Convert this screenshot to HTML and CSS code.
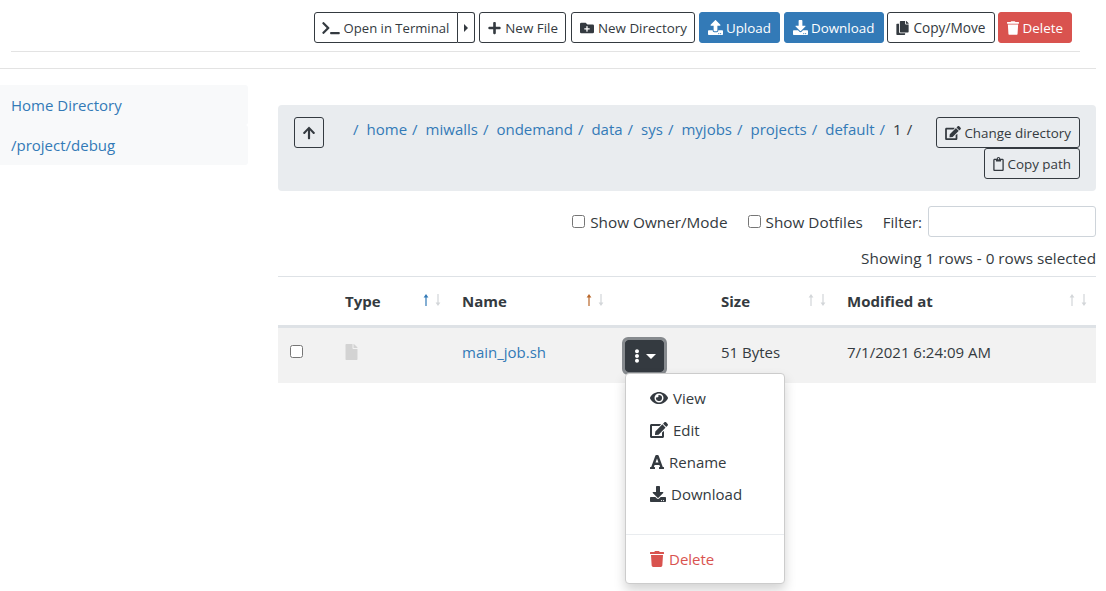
FILE: index.html
```html
<!DOCTYPE html>
<html lang="en">
<head>
<meta charset="utf-8">
<title>Files</title>
<link rel="stylesheet" href="styles.css">
</head>
<body>
<svg class="defs" aria-hidden="true">
<symbol id="i-upload" viewBox="0 0 512 512"><path d="M296 384h-80c-13.3 0-24-10.7-24-24V192h-87.7c-17.8 0-26.7-21.5-14.1-34.1L242.3 5.7c7.5-7.5 19.8-7.5 27.3 0l152.2 152.2c12.6 12.6 3.7 34.1-14.1 34.1H320v168c0 13.3-10.7 24-24 24zm216-8v112c0 13.3-10.7 24-24 24H24c-13.3 0-24-10.7-24-24V376c0-13.3 10.7-24 24-24h136v8c0 30.9 25.1 56 56 56h80c30.9 0 56-25.1 56-56v-8h136c13.3 0 24 10.7 24 24zm-124 88c0-11-9-20-20-20s-20 9-20 20 9 20 20 20 20-9 20-20zm64 0c0-11-9-20-20-20s-20 9-20 20 9 20 20 20 20-9 20-20z"/></symbol>
<symbol id="i-download" viewBox="0 0 512 512"><path d="M216 0h80c13.3 0 24 10.7 24 24v168h87.7c17.8 0 26.7 21.5 14.1 34.1L269.7 378.3c-7.5 7.5-19.8 7.5-27.3 0L90.1 226.1c-12.6-12.6-3.7-34.1 14.1-34.1H192V24c0-13.3 10.7-24 24-24zm296 376v112c0 13.3-10.7 24-24 24H24c-13.3 0-24-10.7-24-24V376c0-13.3 10.7-24 24-24h146.7l49 49c20.1 20.1 52.5 20.1 72.6 0l49-49H488c13.3 0 24 10.7 24 24zm-124 88c0-11-9-20-20-20s-20 9-20 20 9 20 20 20 20-9 20-20zm64 0c0-11-9-20-20-20s-20 9-20 20 9 20 20 20 20-9 20-20z"/></symbol>
<symbol id="i-trash" viewBox="0 0 448 512"><path d="M432 32H312l-9.4-18.7A24 24 0 0 0 281.1 0H166.8a23.72 23.72 0 0 0-21.4 13.3L136 32H16A16 16 0 0 0 0 48v32a16 16 0 0 0 16 16h416a16 16 0 0 0 16-16V48a16 16 0 0 0-16-16zM53.2 467a48 48 0 0 0 47.9 45h245.8a48 48 0 0 0 47.9-45L416 128H32z"/></symbol>
<symbol id="i-plus" viewBox="0 0 448 512"><path d="M416 208H272V64c0-17.67-14.33-32-32-32h-32c-17.67 0-32 14.33-32 32v144H32c-17.67 0-32 14.33-32 32v32c0 17.67 14.33 32 32 32h144v144c0 17.67 14.33 32 32 32h32c17.67 0 32-14.33 32-32V304h144c17.67 0 32-14.33 32-32v-32c0-17.67-14.33-32-32-32z"/></symbol>
<symbol id="i-terminal" viewBox="0 0 640 512"><path d="M257.981 272.971L63.638 467.314c-9.373 9.373-24.569 9.373-33.941 0L7.029 444.647c-9.357-9.357-9.375-24.522-.04-33.901L161.011 256 6.99 101.255c-9.335-9.379-9.317-24.544.04-33.901l22.667-22.667c9.373-9.373 24.569-9.373 33.941 0L257.981 239.03c9.373 9.372 9.373 24.568 0 33.941zM640 456v-32c0-13.255-10.745-24-24-24H312c-13.255 0-24 10.745-24 24v32c0 13.255 10.745 24 24 24h304c13.255 0 24-10.745 24-24z"/></symbol>
<symbol id="i-folder" viewBox="0 0 512 512"><path d="M464,128H272L208,64H48A48,48,0,0,0,0,112V400a48,48,0,0,0,48,48H464a48,48,0,0,0,48-48V176A48,48,0,0,0,464,128ZM359.5,296a16,16,0,0,1-16,16h-64v64a16,16,0,0,1-16,16h-16a16,16,0,0,1-16-16V312h-64a16,16,0,0,1-16-16V280a16,16,0,0,1,16-16h64V200a16,16,0,0,1,16-16h16a16,16,0,0,1,16,16v64h64a16,16,0,0,1,16,16Z"/></symbol>
<symbol id="i-copy" viewBox="0 0 448 512"><path d="M320 448v40c0 13.255-10.745 24-24 24H24c-13.255 0-24-10.745-24-24V120c0-13.255 10.745-24 24-24h72v296c0 30.879 25.121 56 56 56h168zm0-344V0H152c-13.255 0-24 10.745-24 24v368c0 13.255 10.745 24 24 24h272c13.255 0 24-10.745 24-24V128H344c-13.2 0-24-10.8-24-24zm120.971-31.029L375.029 7.029A24 24 0 0 0 358.059 0H352v96h96v-6.059a24 24 0 0 0-7.029-16.97z"/></symbol>
<symbol id="i-edit" viewBox="0 0 576 512"><path d="M402.6 83.2l90.2 90.2c3.8 3.8 3.8 10 0 13.8L274.4 405.6l-92.8 10.3c-12.4 1.4-22.9-9.1-21.5-21.5l10.3-92.8L388.8 83.2c3.8-3.8 10-3.8 13.8 0zm162-22.9l-48.8-48.8c-15.2-15.2-39.9-15.2-55.2 0l-35.4 35.4c-3.8 3.8-3.8 10 0 13.8l90.2 90.2c3.8 3.8 10 3.8 13.8 0l35.4-35.4c15.2-15.3 15.2-40 0-55.2zM384 346.2V448H64V128h229.8c3.2 0 6.2-1.3 8.5-3.5l40-40c7.6-7.6 2.2-20.5-8.5-20.5H48C21.5 64 0 85.5 0 112v352c0 26.5 21.5 48 48 48h352c26.5 0 48-21.5 48-48V306.2c0-10.7-12.9-16-20.5-8.5l-40 40c-2.2 2.3-3.5 5.3-3.5 8.5z"/></symbol>
<symbol id="i-clipboard" viewBox="0 0 384 512"><path d="M336 64h-80c0-35.3-28.7-64-64-64s-64 28.7-64 64H48C21.5 64 0 85.5 0 112v352c0 26.5 21.5 48 48 48h288c26.5 0 48-21.5 48-48V112c0-26.5-21.5-48-48-48zM192 40c13.3 0 24 10.7 24 24s-10.7 24-24 24-24-10.7-24-24 10.7-24 24-24zm144 418c0 3.3-2.7 6-6 6H54c-3.3 0-6-2.7-6-6V118c0-3.3 2.7-6 6-6h42v36c0 6.6 5.4 12 12 12h168c6.6 0 12-5.4 12-12v-36h42c3.3 0 6 2.7 6 6z"/></symbol>
<symbol id="i-up" viewBox="0 0 448 512"><path d="M34.9 289.5l-22.2-22.2c-9.4-9.4-9.4-24.6 0-33.9L207 39c9.4-9.4 24.6-9.4 33.9 0l194.3 194.3c9.4 9.4 9.4 24.6 0 33.9L413 289.4c-9.5 9.5-25 9.3-34.3-.4L264 168.6V456c0 13.3-10.7 24-24 24h-32c-13.3 0-24-10.7-24-24V168.6L69.2 289.1c-9.3 9.8-24.8 10-34.3.4z"/></symbol>
<symbol id="i-file" viewBox="0 0 384 512"><path d="M224 136V0H24C10.7 0 0 10.7 0 24v464c0 13.3 10.7 24 24 24h336c13.3 0 24-10.7 24-24V160H248c-13.2 0-24-10.8-24-24zm160-14.1v6.1H256V0h6.1c6.4 0 12.5 2.5 17 7l97.9 98c4.5 4.5 7 10.6 7 16.9z"/></symbol>
<symbol id="i-dots" viewBox="0 0 192 512"><path d="M96 184c39.8 0 72 32.2 72 72s-32.2 72-72 72-72-32.2-72-72 32.2-72 72-72zM24 80c0 39.8 32.2 72 72 72s72-32.2 72-72S135.8 8 96 8 24 40.2 24 80zm0 352c0 39.8 32.2 72 72 72s72-32.2 72-72-32.2-72-72-72-72 32.2-72 72z"/></symbol>
<symbol id="i-eye" viewBox="0 0 576 512"><path d="M572.52 241.4C518.29 135.59 410.93 64 288 64S57.68 135.64 3.48 241.41a32.4 32.4 0 0 0 0 29.19C57.71 376.41 165.07 448 288 448s230.32-71.64 284.52-177.41a32.4 32.4 0 0 0 0-29.19zM288 400a144 144 0 1 1 144-144 143.93 143.93 0 0 1-144 144zm0-240a95.31 95.31 0 0 0-25.31 3.79 47.85 47.85 0 0 1-66.9 66.9A95.78 95.78 0 1 0 288 160z"/></symbol>
<symbol id="i-font" viewBox="0 0 448 512"><path d="M432 416h-23.41L277.88 53.69A32 32 0 0 0 247.58 32h-47.16a32 32 0 0 0-30.3 21.69L39.41 416H16a16 16 0 0 0-16 16v32a16 16 0 0 0 16 16h128a16 16 0 0 0 16-16v-32a16 16 0 0 0-16-16h-19.6l23.3-64h152.6l23.3 64H304a16 16 0 0 0-16 16v32a16 16 0 0 0 16 16h128a16 16 0 0 0 16-16v-32a16 16 0 0 0-16-16zM176.85 272L224 142.51 271.15 272z"/></symbol>
<symbol id="i-sort-up" viewBox="0 0 8 14"><path d="M4 1 1.6 4.4h1.8V13h1.2V4.4h1.8z"/></symbol>
<symbol id="i-sort-down" viewBox="0 0 8 14"><path d="M4 13 1.6 9.6h1.8V1h1.2v8.6h1.8z"/></symbol>
</svg>

<header class="toolbar-wrap">
  <div class="toolbar">
    <div class="btn-split">
      <button class="btn btn-outline split-main"><svg class="ic ic-terminal"><use href="#i-terminal"/></svg> Open in Terminal</button>
      <button class="btn btn-outline split-caret"><span class="caret-right"></span></button>
    </div>
    <button class="btn btn-outline btn-newfile"><svg class="ic ic-plus"><use href="#i-plus"/></svg> New File</button>
    <button class="btn btn-outline btn-newdir"><svg class="ic"><use href="#i-folder"/></svg> New Directory</button>
    <button class="btn btn-blue btn-tight"><svg class="ic ic-wide"><use href="#i-upload"/></svg> Upload</button>
    <button class="btn btn-blue btn-tight btn-dl"><svg class="ic ic-wide"><use href="#i-download"/></svg> Download</button>
    <button class="btn btn-outline btn-copy"><svg class="ic ic-plus"><use href="#i-copy"/></svg> Copy/Move</button>
    <button class="btn btn-red"><svg class="ic ic-trash"><use href="#i-trash"/></svg> Delete</button>
  </div>
  <hr class="rule-inner">
</header>
<hr class="rule-outer">

<div class="layout">
  <nav class="favorites">
    <a class="fav" href="#">Home Directory</a>
    <a class="fav" href="#">/project/debug</a>
  </nav>
  <main class="content">
    <section class="crumb-panel">
      <button class="btn btn-outline btn-up"><svg class="ic"><use href="#i-up"/></svg></button>
      <ol class="crumbs">
        <li><a href="#"></a><span class="sep">/</span></li>
        <li><a href="#">home</a><span class="sep">/</span></li>
        <li><a href="#">miwalls</a><span class="sep">/</span></li>
        <li><a href="#">ondemand</a><span class="sep">/</span></li>
        <li><a href="#">data</a><span class="sep">/</span></li>
        <li><a href="#">sys</a><span class="sep">/</span></li>
        <li><a href="#">myjobs</a><span class="sep">/</span></li>
        <li><a href="#">projects</a><span class="sep">/</span></li>
        <li><a href="#">default</a><span class="sep">/</span></li>
        <li><span class="cur">1</span><span class="sep">/</span></li>
      </ol>
      <div class="crumb-actions">
        <button class="btn btn-outline btn-chdir"><svg class="ic ic-edit"><use href="#i-edit"/></svg> Change directory</button>
        <button class="btn btn-outline"><svg class="ic ic-clip"><use href="#i-clipboard"/></svg> Copy path</button>
      </div>
    </section>

    <div class="filters">
      <label class="check"><input type="checkbox"> Show Owner/Mode</label>
      <label class="check"><input type="checkbox"> Show Dotfiles</label>
      <label class="filter">Filter: <input type="text" class="filter-input"></label>
    </div>
    <div class="count">Showing 1 rows - 0 rows selected</div>

    <div class="table-wrap">
      <table class="files">
        <colgroup>
          <col class="c-check"><col class="c-type"><col class="c-name"><col class="c-act"><col class="c-size"><col class="c-mod">
        </colgroup>
        <thead>
          <tr>
            <th></th>
            <th>Type<span class="sort"><svg class="on-blue"><use href="#i-sort-up"/></svg><svg><use href="#i-sort-down"/></svg></span></th>
            <th>Name<span class="sort"><svg class="on-orange"><use href="#i-sort-up"/></svg><svg><use href="#i-sort-down"/></svg></span></th>
            <th></th>
            <th>Size<span class="sort"><svg><use href="#i-sort-up"/></svg><svg><use href="#i-sort-down"/></svg></span></th>
            <th>Modified at<span class="sort"><svg><use href="#i-sort-up"/></svg><svg><use href="#i-sort-down"/></svg></span></th>
          </tr>
        </thead>
        <tbody>
          <tr>
            <td class="cell-check"><input type="checkbox"></td>
            <td><svg class="ic ic-file"><use href="#i-file"/></svg></td>
            <td><a href="#">main_job.sh</a></td>
            <td class="cell-act">
              <button class="act-btn"><svg class="ic ic-dots"><use href="#i-dots"/></svg><span class="caret-down"></span></button>
              <div class="menu">
                <a class="menu-item" href="#"><svg class="ic ic-eye"><use href="#i-eye"/></svg> View</a>
                <a class="menu-item" href="#"><svg class="ic ic-medit"><use href="#i-edit"/></svg> Edit</a>
                <a class="menu-item" href="#"><svg class="ic ic-font"><use href="#i-font"/></svg> Rename</a>
                <a class="menu-item" href="#"><svg class="ic ic-mdl"><use href="#i-download"/></svg> Download</a>
                <div class="menu-div"></div>
                <a class="menu-item menu-danger" href="#"><svg class="ic ic-mtrash"><use href="#i-trash"/></svg> Delete</a>
              </div>
            </td>
            <td>51 Bytes</td>
            <td>7/1/2021 6:24:09 AM</td>
          </tr>
        </tbody>
      </table>
    </div>
  </main>
</div>
</body>
</html>
```
FILE: styles.css
```css
* { box-sizing: border-box; }
html, body { margin: 0; padding: 0; height: 591px; overflow: hidden; }
body {
  width: 1096px;
  font-family: "Open Sans", "Noto Sans", sans-serif;
  font-size: 15px;
  color: #343a40;
  background: #fff;
}
a { color: #337ab7; text-decoration: none; }
.defs { display: none; }

.toolbar-wrap { padding: 12px 16px 0 11px; }
.toolbar { display: flex; justify-content: flex-end; gap: 4px; padding-right: 8px; }
.rule-inner { border: 0; border-top: 1px solid #e3e3e3; margin: 8px 0 0; }
.rule-outer { border: 0; border-top: 1px solid #e3e3e3; margin: 16px 0 0; }

.btn {
  display: inline-flex;
  align-items: center;
  justify-content: center;
  gap: 4px;
  height: 31px;
  padding: 0 8px;
  border: 1px solid #343a40;
  border-radius: 3px;
  background: transparent;
  color: #343a40;
  font: inherit;
  font-size: 13.4px;
  white-space: nowrap;
}
.btn-blue { background: #337ab7; border-color: #337ab7; color: #fff; }
.btn-red { background: #d9534f; border-color: #d9534f; color: #fff; }
.btn-tight { gap: 3px; }
.btn-dl { padding-right: 9px; }
.btn-newfile { padding-right: 7px; }
.btn-newdir { padding-right: 7px; margin-left: 1px; }
.btn-chdir { gap: 3px; }
.btn-copy { font-size: 13.7px; margin-left: -1px; }
.btn-copy + .btn { margin-left: -1px; }
.btn-split { display: flex; }
.split-main { border-radius: 3px 0 0 3px; font-size: 13.1px; padding: 0 8px 0 7px; }
.split-caret { border-left: 0; border-radius: 0 3px 3px 0; width: 17px; padding: 0 0 0 6px; justify-content: flex-start; }
.caret-right { border-left: 4px solid #343a40; border-top: 4px solid transparent; border-bottom: 4px solid transparent; }

.ic { width: 14px; height: 14px; fill: currentColor; flex: none; }
.ic-terminal { width: 18px; }
.ic-wide { width: 15px; height: 15px; }
.ic-plus { width: 13px; }
.ic-trash { width: 12px; }
.ic-edit { width: 16px; height: 14px; }
.ic-clip { width: 11px; height: 14px; }

.layout { display: flex; align-items: flex-start; padding-top: 16px; }
.favorites { width: 248px; flex: none; display: flex; flex-direction: column; }
.fav { display: flex; align-items: center; height: 40px; padding-left: 11px; background: #f8f9fa; border-radius: 0 3px 3px 0; }
.content { margin-left: 30px; width: 818px; padding-top: 20px; }

.crumb-panel { display: flex; height: 86px; background: #e9ecef; border-radius: 4px; padding: 12px 16px 0; }
.btn-up { width: 30px; height: 31px; padding: 0; flex: none; }
.crumbs { list-style: none; display: flex; margin: 0; padding: 2px 0 0 29px; flex: 1; font-size: 15px; line-height: 20px; }
.crumbs li { display: flex; }
.crumbs .sep { margin-left: 5px; margin-right: 8px; color: #337ab7; }
.crumbs li:first-child .sep { margin-left: 0; }
.crumbs li:last-child .sep { color: #343a40; }
.crumbs .cur { color: #343a40; }
.crumb-actions { display: flex; flex-direction: column; align-items: flex-end; flex: none; }

.filters { display: flex; justify-content: flex-end; align-items: center; height: 31px; margin-top: 15px; margin-bottom: 1px; font-size: 15.3px; }
.check { display: flex; align-items: center; gap: 5px; margin-right: 20px; }
.check input { width: 13px; height: 13px; margin: 0; }
.filter { display: flex; align-items: center; gap: 6px; font-size: 15px; }
.filter-input { width: 168px; height: 31px; border: 1px solid #ced4da; border-radius: 3px; background: #fff; }
.count { text-align: right; line-height: 20px; margin-top: 11px; font-size: 15.3px; }

.table-wrap { margin-top: 8px; }
.files { width: 818px; border-collapse: collapse; table-layout: fixed; }
.c-check { width: 55px; } .c-type { width: 117px; } .c-name { width: 163px; }
.c-act { width: 96px; } .c-size { width: 126px; } .c-mod { width: 261px; }
.files th {
  position: relative;
  height: 50px;
  padding: 0 12px;
  text-align: left;
  font-weight: 700;
  border-top: 1px solid #dee2e6;
  border-bottom: 3px solid #dee2e6;
  color: #343a40;
}
.sort { position: absolute; right: 8px; top: 16px; display: flex; gap: 4px; }
.sort svg { width: 8px; height: 14px; fill: #d3d6d9; }
.sort .on-blue { fill: #337ab7; }
.sort .on-orange { fill: #b9672a; }
.files td { height: 56px; padding: 14px 12px 0; vertical-align: top; line-height: 20px; background: #f2f2f2; }
.files td.cell-check { padding-top: 17px; }
.cell-check input { width: 13px; height: 13px; margin: 0; display: block; }
.files td.cell-act { position: relative; padding-top: 12px; }
.ic-file { width: 13px; height: 16px; fill: #d3d3d3; display: block; margin-top: 2px; }

.act-btn {
  display: flex;
  align-items: center;
  justify-content: center;
  gap: 6px;
  width: 39px;
  height: 32px;
  padding: 0;
  border: 0;
  border-radius: 3px;
  background: #343a40;
  color: #fff;
  outline: 3px solid #868a8e;
}
.ic-dots { width: 6px; height: 14px; }
.caret-down { border-top: 5px solid #fff; border-left: 5px solid transparent; border-right: 5px solid transparent; }

.menu {
  position: absolute;
  left: 12px;
  top: 45px;
  width: 160px;
  height: 211px;
  padding-top: 8px;
  background: #fff;
  border: 1px solid #ccc;
  border-radius: 4px;
  box-shadow: 0 6px 12px rgba(0,0,0,.175);
  z-index: 5;
}
.menu-item { display: flex; align-items: center; gap: 5px; height: 32px; padding-left: 24px; color: #343a40; }
.menu-div { border-top: 1px solid #e9ecef; margin-top: 24px; margin-bottom: 8px; }
.menu-item.menu-danger { color: #d9534f; }
.ic-eye { width: 18px; height: 16px; }
.ic-medit { width: 18px; height: 16px; }
.ic-font { width: 14px; height: 16px; }
.ic-mdl { width: 16px; height: 16px; }
.ic-mtrash { width: 14px; height: 16px; }
```
